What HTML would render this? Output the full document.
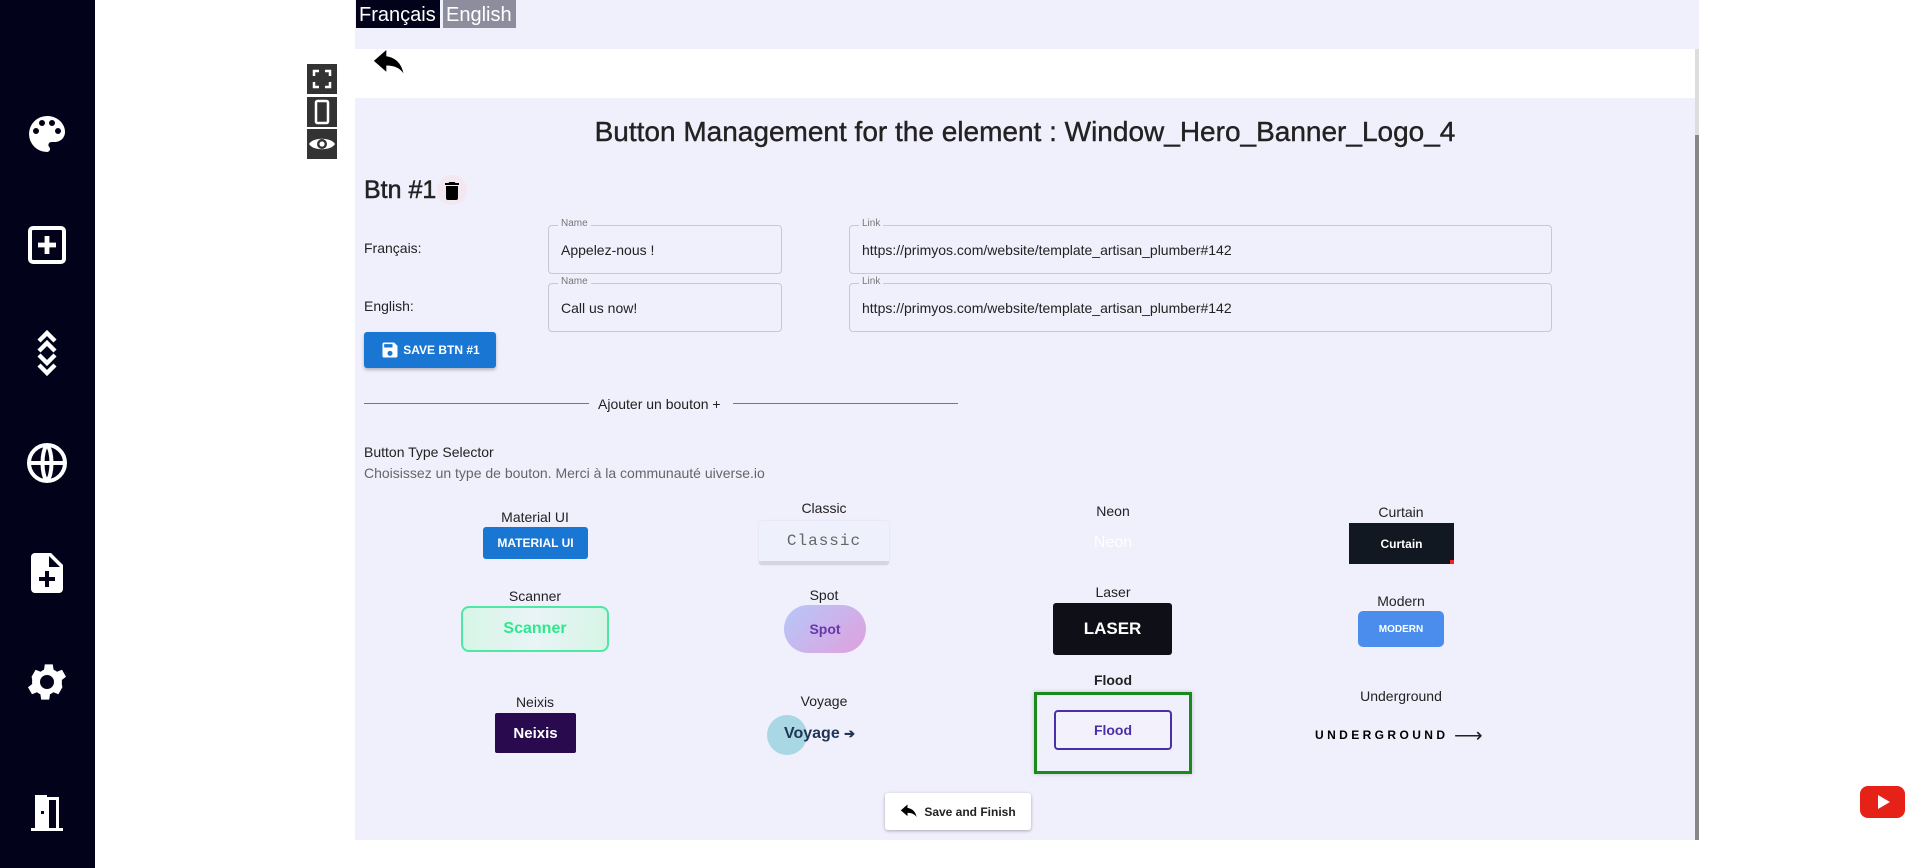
<!DOCTYPE html>
<html><head><meta charset="utf-8"><style>
*{box-sizing:border-box;margin:0;padding:0}
body{width:1917px;height:868px;position:relative;background:#fff;font-family:"Liberation Sans",sans-serif;color:#222;overflow:hidden}
.a{position:absolute}
.side{left:0;top:0;width:95px;height:868px;background:#02021a}
.ic{position:absolute;left:23px;width:48px;height:48px}
.lab{position:absolute;font-size:14px;color:#222;text-align:center;width:200px;margin-left:-100px}
.btn{position:absolute;display:flex;align-items:center;justify-content:center}
.fld{position:absolute;border:1px solid #c8c6d8;border-radius:4px;font-size:14px;padding-left:12px;display:flex;align-items:center;color:#222}
.fld span{position:absolute;top:-8px;left:9px;font-size:10px;color:#777;background:#f0effc;padding:0 3px}
</style></head><body>
<div class="a side">
<svg class="ic" style="top:110px" viewBox="0 0 24 24" fill="#fff"><path d="M12 3a9 9 0 0 0 0 18c.8 0 1.5-.7 1.5-1.5 0-.4-.1-.7-.4-1-.2-.3-.4-.6-.4-1 0-.8.7-1.5 1.5-1.5H16c2.8 0 5-2.2 5-5 0-4.4-4-8-9-8zm-5.5 9a1.5 1.5 0 1 1 0-3 1.5 1.5 0 0 1 0 3zm3-4a1.5 1.5 0 1 1 0-3 1.5 1.5 0 0 1 0 3zm5 0a1.5 1.5 0 1 1 0-3 1.5 1.5 0 0 1 0 3zm3 4a1.5 1.5 0 1 1 0-3 1.5 1.5 0 0 1 0 3z"/></svg>
<svg class="ic" style="top:221px" viewBox="0 0 24 24" fill="none" stroke="#fff" stroke-width="2"><rect x="3.5" y="3.5" width="17" height="17" rx="1.5"/><path d="M12 7.5v9M7.5 12h9" stroke-width="2.4"/></svg>
<svg class="ic" style="top:329px" viewBox="0 0 24 24" fill="none" stroke="#fff" stroke-width="2.2"><path d="M8 6l4-4 4 4M8 11l4-4 4 4M8 13l4 4 4-4M8 18l4 4 4-4"/></svg>
<svg class="ic" style="top:439px" viewBox="0 0 24 24" fill="none" stroke="#fff" stroke-width="2"><circle cx="12" cy="12" r="9"/><path d="M3 12h18M12 3c3 3 3 15 0 18M12 3c-3 3-3 15 0 18"/></svg>
<svg class="ic" style="top:549px" viewBox="0 0 24 24" fill="#fff"><path d="M6 2h8l6 6v12a2 2 0 0 1-2 2H6a2 2 0 0 1-2-2V4a2 2 0 0 1 2-2zm7 1.5V9h5.5zM11 11v3H8v2h3v3h2v-3h3v-2h-3v-3z"/></svg>
<svg class="ic" style="top:658px" viewBox="0 0 24 24" fill="#fff"><path d="M19.4 13a7.5 7.5 0 0 0 0-2l2.1-1.6-2-3.5-2.5 1a7 7 0 0 0-1.7-1l-.4-2.7h-4l-.4 2.7a7 7 0 0 0-1.7 1l-2.5-1-2 3.5L4.6 11a7.5 7.5 0 0 0 0 2l-2.1 1.6 2 3.5 2.5-1a7 7 0 0 0 1.7 1l.4 2.7h4l.4-2.7a7 7 0 0 0 1.7-1l2.5 1 2-3.5zM12 15.5a3.5 3.5 0 1 1 0-7 3.5 3.5 0 0 1 0 7z"/></svg>
<svg class="ic" style="top:789px" viewBox="0 0 24 24" fill="#fff"><path d="M4 21h16v-1.5h-2V4h-6V3H6v16.5H4zM13 5.5h3.5v14H13zM9 11h1.5v1.5H9z"/></svg>
</div>
<div class="a" style="left:307px;top:64px;width:30px;height:30px;background:#333"><svg width="30" height="30" viewBox="0 0 30 30" fill="none" stroke="#fff" stroke-width="2.5"><path d="M7 12V7h5M18 7h5v5M23 18v5h-5M12 23H7v-5"/></svg></div>
<div class="a" style="left:307px;top:97px;width:30px;height:30px;background:#333"><svg width="30" height="30" viewBox="0 0 30 30" fill="none" stroke="#fff" stroke-width="2.5"><rect x="9" y="4" width="12" height="22" rx="1.5"/></svg></div>
<div class="a" style="left:307px;top:129px;width:30px;height:30px;background:#333"><svg width="30" height="30" viewBox="0 0 30 30"><path d="M2 15c4-7 22-7 26 0-4 7-22 7-26 0z" fill="#fff"/><circle cx="15" cy="15" r="5" fill="#333"/><circle cx="15" cy="15" r="2.6" fill="#fff"/></svg></div>

<div class="a" style="left:355px;top:0;width:1344px;height:840px;background:#f0effc"></div>
<div class="a" style="left:356px;top:0;width:84px;height:28px;background:#02021a;color:#fff;font-size:20px;line-height:30px;padding-left:3px">Français</div>
<div class="a" style="left:443px;top:0;width:73px;height:28px;background:#8e8d9e;color:#fff;font-size:20px;line-height:30px;padding-left:3px">English</div>
<div class="a" style="left:355px;top:49px;width:1340px;height:49px;background:#fff"></div>
<svg class="a" style="left:372px;top:50px" width="38" height="28" viewBox="0 0 24 18"><path d="M9 4V0L1 7l8 7V10c5 0 8.5 1.5 11 5-1-5-4-10-11-11z" fill="#000"/></svg>
<div class="a" style="left:1695px;top:135px;width:4px;height:705px;background:#888"></div>
<div class="a" style="left:1695px;top:49px;width:4px;height:86px;background:#ddd"></div>

<div class="a" style="left:355px;top:116px;width:1340px;text-align:center;font-size:28px;color:#222;-webkit-text-stroke:0.4px #222">Button Management for the element : Window_Hero_Banner_Logo_4</div>
<div class="a" style="left:364px;top:176px;font-size:25px;color:#222;-webkit-text-stroke:0.5px #222">Btn #1</div>
<div class="a" style="left:437px;top:175px;width:30px;height:30px;border-radius:50%;background:#f3e8f0"></div>
<svg class="a" style="left:440px;top:178px" width="24" height="26" viewBox="0 0 24 24"><path d="M6 19a2 2 0 0 0 2 2h8a2 2 0 0 0 2-2V7H6zM19 4h-3.5l-1-1h-5l-1 1H5v2h14z" fill="#000"/></svg>
<div class="a" style="left:364px;top:240px;font-size:14px">Français:</div>
<div class="a" style="left:364px;top:298px;font-size:14px">English:</div>
<div class="fld" style="left:548px;top:225px;width:234px;height:49px"><span>Name</span>Appelez-nous !</div>
<div class="fld" style="left:548px;top:283px;width:234px;height:49px"><span>Name</span>Call us now!</div>
<div class="fld" style="left:849px;top:225px;width:703px;height:49px"><span>Link</span>https://primyos.com/website/template_artisan_plumber#142</div>
<div class="fld" style="left:849px;top:283px;width:703px;height:49px"><span>Link</span>https://primyos.com/website/template_artisan_plumber#142</div>
<div class="btn" style="left:364px;top:332px;width:132px;height:36px;background:#1976d2;border-radius:3px;color:#fff;font-size:12px;font-weight:bold;box-shadow:0 2px 3px rgba(0,0,0,.25)"><svg width="20" height="20" viewBox="0 0 24 24" style="margin-right:3px"><path d="M17 3H5a2 2 0 0 0-2 2v14a2 2 0 0 0 2 2h14a2 2 0 0 0 2-2V7zm-5 16a3 3 0 1 1 0-6 3 3 0 0 1 0 6zm3-10H5V5h10z" fill="#fff"/></svg>SAVE BTN #1</div>

<div class="a" style="left:364px;top:403px;width:225px;height:1px;background:#777"></div>
<div class="a" style="left:733px;top:403px;width:225px;height:1px;background:#777"></div>
<div class="a" style="left:598px;top:396px;font-size:14px">Ajouter un bouton +</div>
<div class="a" style="left:364px;top:444px;font-size:14px">Button Type Selector</div>
<div class="a" style="left:364px;top:465px;font-size:14px;color:#666">Choisissez un type de bouton. Merci à la communauté uiverse.io</div>

<div class="lab" style="left:535px;top:509px">Material UI</div>
<div class="btn" style="left:483px;top:527px;width:105px;height:32px;background:#1976d2;color:#fff;font-size:12px;font-weight:bold;border-radius:3px">MATERIAL UI</div>
<div class="lab" style="left:824px;top:500px">Classic</div>
<div class="btn" style="left:759px;top:521px;width:130px;height:44px;background:#eef1fb;color:#666;font-family:'Liberation Mono',monospace;font-size:16px;letter-spacing:1px;border-bottom:4px solid #d5d5e2;border-radius:3px;box-shadow:0 0 2px rgba(0,0,0,.08)">Classic</div>
<div class="lab" style="left:1113px;top:503px">Neon</div>
<div class="btn" style="left:1063px;top:528px;width:100px;height:30px;color:#fff;font-size:16px">Neon</div>
<div class="lab" style="left:1401px;top:504px">Curtain</div>
<div class="btn" style="left:1349px;top:523px;width:105px;height:41px;background:#111822;color:#fff;font-size:12px;font-weight:bold">Curtain</div>
<div class="a" style="left:1450px;top:560px;width:4px;height:4px;background:#e22"></div>

<div class="lab" style="left:535px;top:588px">Scanner</div>
<div class="btn" style="left:461px;top:606px;width:148px;height:46px;border:2px solid #4de8a4;border-radius:8px;background:linear-gradient(90deg,#d6f5e6,#eaf4f6,#d6f5e6);color:#2ee88f;font-size:16px;font-weight:bold">Scanner</div>
<div class="lab" style="left:824px;top:587px">Spot</div>
<div class="btn" style="left:784px;top:605px;width:82px;height:48px;border-radius:24px;background:linear-gradient(135deg,#b6c8fb,#e0a0dc);color:#6a36a8;font-size:14px;font-weight:bold">Spot</div>
<div class="lab" style="left:1113px;top:584px">Laser</div>
<div class="btn" style="left:1053px;top:603px;width:119px;height:52px;background:#0f0f17;border-radius:3px;color:#fff;font-size:17px;font-weight:bold">LASER</div>
<div class="lab" style="left:1401px;top:593px">Modern</div>
<div class="btn" style="left:1358px;top:611px;width:86px;height:36px;background:#4a8ded;border-radius:5px;color:#fff;font-size:10px;font-weight:bold">MODERN</div>

<div class="lab" style="left:535px;top:694px">Neixis</div>
<div class="btn" style="left:495px;top:713px;width:81px;height:40px;background:#2a0a4f;color:#fff;font-size:15px;font-weight:bold;border-radius:2px">Neixis</div>
<div class="lab" style="left:824px;top:693px">Voyage</div>
<div class="a" style="left:767px;top:715px;width:40px;height:40px;border-radius:50%;background:#a9d7e3"></div>
<div class="a" style="left:784px;top:725px;font-size:16px;font-weight:bold;color:#1e3555">Voyage <span style="font-size:13px">➔</span></div>
<div class="lab" style="left:1113px;top:672px;font-weight:bold">Flood</div>
<div class="a" style="left:1034px;top:692px;width:158px;height:82px;border:3px solid #1a8a1a;box-shadow:0 0 4px rgba(0,0,0,.2)"></div>
<div class="btn" style="left:1054px;top:710px;width:118px;height:40px;border:2px solid #4b2fa8;border-radius:4px;color:#4b2fa8;font-size:14px;font-weight:bold;background:#f3f2fc">Flood</div>
<div class="lab" style="left:1401px;top:688px">Underground</div>
<div class="a" style="left:1315px;top:728px;font-size:12px;font-weight:bold;letter-spacing:3.4px;color:#000">UNDERGROUND</div>
<div class="a" style="left:1454px;top:723px;font-size:20px">⟶</div>

<div class="btn" style="left:885px;top:793px;width:146px;height:37px;background:#fff;border-radius:3px;box-shadow:0 1px 3px rgba(0,0,0,.3);font-size:12px;font-weight:bold;color:#222"><svg width="20" height="16" viewBox="0 0 24 18" style="margin-right:4px"><path d="M9 4V0L1 7l8 7V10c5 0 8.5 1.5 11 5-1-5-4-10-11-11z" fill="#000"/></svg>Save and Finish</div>

<div class="a" style="left:1860px;top:786px;width:45px;height:32px;background:#e62117;border-radius:8px"></div>
<svg class="a" style="left:1860px;top:786px" width="45" height="32"><path d="M18 9v14l12-7z" fill="#fff"/></svg>
</body></html>
